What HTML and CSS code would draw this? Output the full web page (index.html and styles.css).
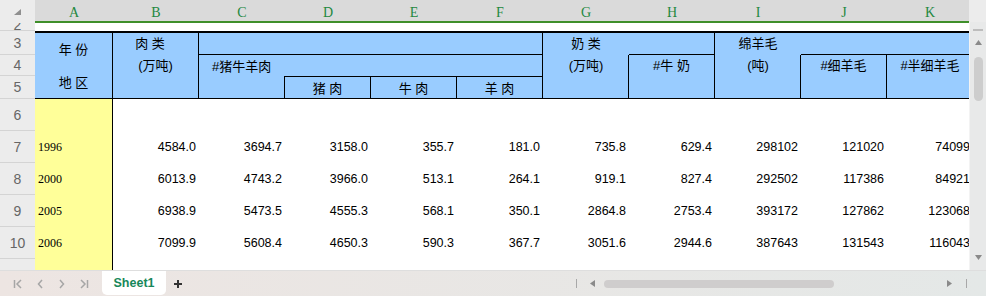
FILE: index.html
```html
<!DOCTYPE html>
<html lang="zh-CN">
<head>
    <meta charset="UTF-8">
    <meta name="viewport" content="width=device-width, initial-scale=1.0">
    <title>Sheet1</title>
    <link rel="stylesheet" href="styles.css">
</head>
<body>
    <div class="app">
        <div class="sheet">
            <div class="grid">
                <!-- column letters -->
                <div class="corner">
                    <svg width="8" height="7" viewBox="0 0 8 7"><path d="M7 0V6H0Z" fill="#8f8f8f"/></svg>
                </div>
                <div class="col">A</div>
                <div class="col">B</div>
                <div class="col">C</div>
                <div class="col">D</div>
                <div class="col">E</div>
                <div class="col">F</div>
                <div class="col">G</div>
                <div class="col">H</div>
                <div class="col">I</div>
                <div class="col">J</div>
                <div class="col">K</div>

                <!-- row 2 -->
                <div class="rh rh2"><span>2</span></div>
                <div class="blank span11"></div>

                <!-- header rows 3-5 -->
                <div class="rh">3</div>
                <div class="hd rows3 bt bb br stack">
                    <span>年 份</span>
                    <span>地 区</span>
                </div>
                <div class="hd rows3 bt bb br lines">
                    <span class="shift">肉 类</span>
                    <span>(万吨)</span>
                </div>
                <div class="hd cols4 bt bb br"></div>
                <div class="hd rows3 bt bb lines">
                    <span>奶 类</span>
                    <span>(万吨)</span>
                </div>
                <div class="hd bt bb br"></div>
                <div class="hd rows3 bt bb lines">
                    <span>绵羊毛</span>
                    <span>(吨)</span>
                </div>
                <div class="hd cols2 bt bb"></div>

                <div class="rh">4</div>
                <div class="hd cols4 br sub">#猪牛羊肉</div>
                <div class="hd rows2 bl br bb lines pull">
                    <span>#牛 奶</span>
                </div>
                <div class="hd rows2 bl br bb lines pull">
                    <span>#细羊毛</span>
                </div>
                <div class="hd rows2 bb lines">
                    <span>#半细羊毛</span>
                </div>

                <div class="rh">5</div>
                <div class="hd bb br"></div>
                <div class="hd bt1 bb br mid">猪 肉</div>
                <div class="hd bt1 bb br mid">牛 肉</div>
                <div class="hd bt1 bb br mid">羊 肉</div>

                <!-- data -->
                <div class="rh tall">6</div>
                <div class="yr"></div>
                <div class="blank span10"></div>

                <div class="rh tall">7</div>
                <div class="yr">1996</div>
                <div class="n">4584.0</div>
                <div class="n">3694.7</div>
                <div class="n">3158.0</div>
                <div class="n">355.7</div>
                <div class="n">181.0</div>
                <div class="n">735.8</div>
                <div class="n">629.4</div>
                <div class="n">298102</div>
                <div class="n">121020</div>
                <div class="n">74099</div>

                <div class="rh tall">8</div>
                <div class="yr">2000</div>
                <div class="n">6013.9</div>
                <div class="n">4743.2</div>
                <div class="n">3966.0</div>
                <div class="n">513.1</div>
                <div class="n">264.1</div>
                <div class="n">919.1</div>
                <div class="n">827.4</div>
                <div class="n">292502</div>
                <div class="n">117386</div>
                <div class="n">84921</div>

                <div class="rh tall">9</div>
                <div class="yr">2005</div>
                <div class="n">6938.9</div>
                <div class="n">5473.5</div>
                <div class="n">4555.3</div>
                <div class="n">568.1</div>
                <div class="n">350.1</div>
                <div class="n">2864.8</div>
                <div class="n">2753.4</div>
                <div class="n">393172</div>
                <div class="n">127862</div>
                <div class="n">123068</div>

                <div class="rh tall">10</div>
                <div class="yr">2006</div>
                <div class="n">7099.9</div>
                <div class="n">5608.4</div>
                <div class="n">4650.3</div>
                <div class="n">590.3</div>
                <div class="n">367.7</div>
                <div class="n">3051.6</div>
                <div class="n">2944.6</div>
                <div class="n">387643</div>
                <div class="n">131543</div>
                <div class="n">116043</div>

                <div class="rh tall">11</div>
                <div class="yr">2007</div>
                <div class="n">6865.7</div>
                <div class="n">5278.8</div>
                <div class="n">4287.8</div>
                <div class="n">613.4</div>
                <div class="n">382.6</div>
                <div class="n">3633.4</div>
                <div class="n">3525.2</div>
                <div class="n">363470</div>
                <div class="n">124828</div>
                <div class="n">123868</div>
            </div>

            <div class="vscroll">
                <div class="vs-top"></div>
                <div class="vs-body">
                    <div class="vs-line"></div>
                    <svg class="vs-up" width="7" height="5" viewBox="0 0 7 5"><path d="M3.5 0L7 5H0Z" fill="#8a8a8a"/></svg>
                    <div class="vs-thumb"></div>
                    <div class="grow"></div>
                    <svg class="vs-down" width="7" height="5" viewBox="0 0 7 5"><path d="M0 0H7L3.5 5Z" fill="#8a8a8a"/></svg>
                </div>
            </div>
        </div>

        <div class="tabbar">
            <div class="nav">
                <div class="navbtn">
                    <svg width="10" height="10" viewBox="0 0 10 10"><path d="M1.5 1V9M8 1L4 5L8 9" stroke="#a6a6a6" stroke-width="1.5" fill="none"/></svg>
                </div>
                <div class="navbtn">
                    <svg width="10" height="10" viewBox="0 0 10 10"><path d="M7 1L3.5 5L7 9" stroke="#a6a6a6" stroke-width="1.5" fill="none"/></svg>
                </div>
                <div class="navbtn">
                    <svg width="10" height="10" viewBox="0 0 10 10"><path d="M3 1L6.5 5L3 9" stroke="#a6a6a6" stroke-width="1.5" fill="none"/></svg>
                </div>
                <div class="navbtn">
                    <svg width="10" height="10" viewBox="0 0 10 10"><path d="M2 1L6 5L2 9M8.5 1V9" stroke="#a6a6a6" stroke-width="1.5" fill="none"/></svg>
                </div>
            </div>
            <div class="tab">Sheet1</div>
            <div class="add">
                <svg width="10" height="10" viewBox="0 0 10 10"><path d="M5 1V9M1 5H9" stroke="#333" stroke-width="2" fill="none"/></svg>
            </div>
            <div class="grow"></div>
            <div class="hscroll">
                <div class="hs-bar"></div>
                <svg class="hs-left" width="5" height="7" viewBox="0 0 5 7"><path d="M5 0V7L0 3.5Z" fill="#8a8a8a"/></svg>
                <div class="hs-thumb"></div>
                <div class="grow"></div>
                <svg class="hs-right" width="5" height="7" viewBox="0 0 5 7"><path d="M0 0L5 3.5L0 7Z" fill="#8a8a8a"/></svg>
                <div class="hs-bar end"></div>
            </div>
        </div>
    </div>
</body>
</html>
```

FILE: styles.css
```css
body {
    margin: 0;
    background: #ffffff;
    font-family: "Liberation Sans", Arial, sans-serif;
}
.app {
    width: 986px;
    height: 296px;
    display: flex;
    flex-direction: column;
    overflow: hidden;
}
.sheet {
    display: flex;
    height: 270px;
    overflow: hidden;
}
.grow {
    flex: 1;
}

/* grid */
.grid {
    width: 969px;
    overflow: hidden;
    display: grid;
    grid-template-columns: 35px 78px repeat(10, 86px);
    grid-template-rows: 23px 8px 24px 21px 23px repeat(6, 32px);
}
.grid > div {
    box-sizing: border-box;
    min-width: 0;
}
.corner {
    background: #ececec;
    display: flex;
    justify-content: flex-end;
    padding: 9px 13px 0 0;
}
.col {
    background: #dadada;
    border-bottom: 2px solid #3f8f2a;
    color: #23883f;
    font-family: "Liberation Serif", serif;
    font-size: 14px;
    display: flex;
    justify-content: center;
    align-items: center;
    padding-top: 4px;
}
.rh {
    grid-column: 1;
    background: #ececec;
    border-bottom: 1px solid #d4d4d4;
    color: #666;
    font-size: 14px;
    display: flex;
    justify-content: center;
    align-items: center;
}
.rh2 {
    overflow: hidden;
    align-items: flex-start;
    line-height: 14px;
}
.rh2 span {
    margin-top: -5px;
}
.blank {
    background: #fff;
}
.span11 {
    grid-column: span 11;
}
.span10 {
    grid-column: span 10;
}

/* header block */
.hd {
    background: #99ccff;
    color: #000;
    font-family: "Liberation Sans", "Noto Sans CJK SC", sans-serif;
    font-size: 13px;
}
.rows3 {
    grid-row: span 3;
}
.rows2 {
    grid-row: span 2;
}
.cols4 {
    grid-column: span 4;
}
.cols2 {
    grid-column: span 2;
}
.bt {
    border-top: 2px solid #000;
}
.bt1 {
    border-top: 1px solid #000;
}
.bb {
    border-bottom: 1px solid #000;
}
.br {
    border-right: 1px solid #000;
}
.bl {
    border-left: 1px solid #000;
}
.pull {
    margin-left: -1px;
}
.stack {
    display: flex;
    flex-direction: column;
    align-items: center;
    justify-content: center;
    gap: 16px;
    line-height: 17px;
}
.lines {
    display: flex;
    flex-direction: column;
    align-items: center;
}
.lines span {
    height: 22px;
    line-height: 22px;
}
.lines .shift {
    padding-right: 11px;
}
.rows2.lines span {
    height: 21px;
    line-height: 21px;
}
.sub {
    display: flex;
    align-items: center;
    padding-left: 13px;
}
.mid {
    display: flex;
    justify-content: center;
    align-items: center;
}

/* data */
.yr {
    background: #ffff99;
    border-right: 1px solid #000;
    font-family: "Liberation Serif", serif;
    font-size: 12px;
    color: #000;
    display: flex;
    align-items: center;
    padding-left: 3px;
}
.n {
    display: flex;
    justify-content: flex-end;
    align-items: center;
    padding-right: 3px;
    font-size: 12.5px;
    color: #000;
}

/* vertical scrollbar */
.vscroll {
    width: 17px;
    display: flex;
    flex-direction: column;
    background: #ebebeb;
}
.vs-top {
    height: 22px;
    background: #ececec;
}
.vs-body {
    flex: 1;
    display: flex;
    flex-direction: column;
    align-items: center;
    background: #e8e9e9;
    border-left: 1px solid #f3f3f3;
}
.vs-line {
    width: 10px;
    height: 2px;
    background: #bdbdbd;
    margin-top: 7px;
}
.vs-up {
    margin-top: 9px;
}
.vs-thumb {
    width: 9px;
    height: 44px;
    border-radius: 5px;
    background: #cdcdcd;
    margin-top: 12px;
}
.vs-down {
    margin-bottom: 10px;
}

/* tab bar */
.tabbar {
    height: 26px;
    display: flex;
    align-items: center;
    background: linear-gradient(90deg, #ede5e2, #e4e8e7);
    border-top: 1px solid #dedede;
    box-sizing: border-box;
}
.nav {
    display: flex;
    padding-left: 7px;
}
.navbtn {
    width: 22px;
    display: flex;
    justify-content: center;
}
.tab {
    align-self: flex-start;
    margin-left: 7px;
    width: 64px;
    height: 24px;
    background: #fff;
    border-radius: 0 0 5px 5px;
    color: #17875a;
    font-weight: bold;
    font-size: 12.5px;
    display: flex;
    justify-content: center;
    align-items: center;
}
.add {
    width: 24px;
    display: flex;
    justify-content: center;
}
.hscroll {
    width: 416px;
    display: flex;
    align-items: center;
}
.hs-bar {
    width: 1px;
    height: 9px;
    background: #a8a8a8;
    margin-left: 6px;
}
.hs-left {
    margin-left: 13px;
}
.hs-thumb {
    width: 230px;
    height: 8px;
    border-radius: 4px;
    background: #cfcdcd;
    margin-left: 9px;
}
.hs-bar.end {
    margin-left: 14px;
    margin-right: 19px;
}
```
